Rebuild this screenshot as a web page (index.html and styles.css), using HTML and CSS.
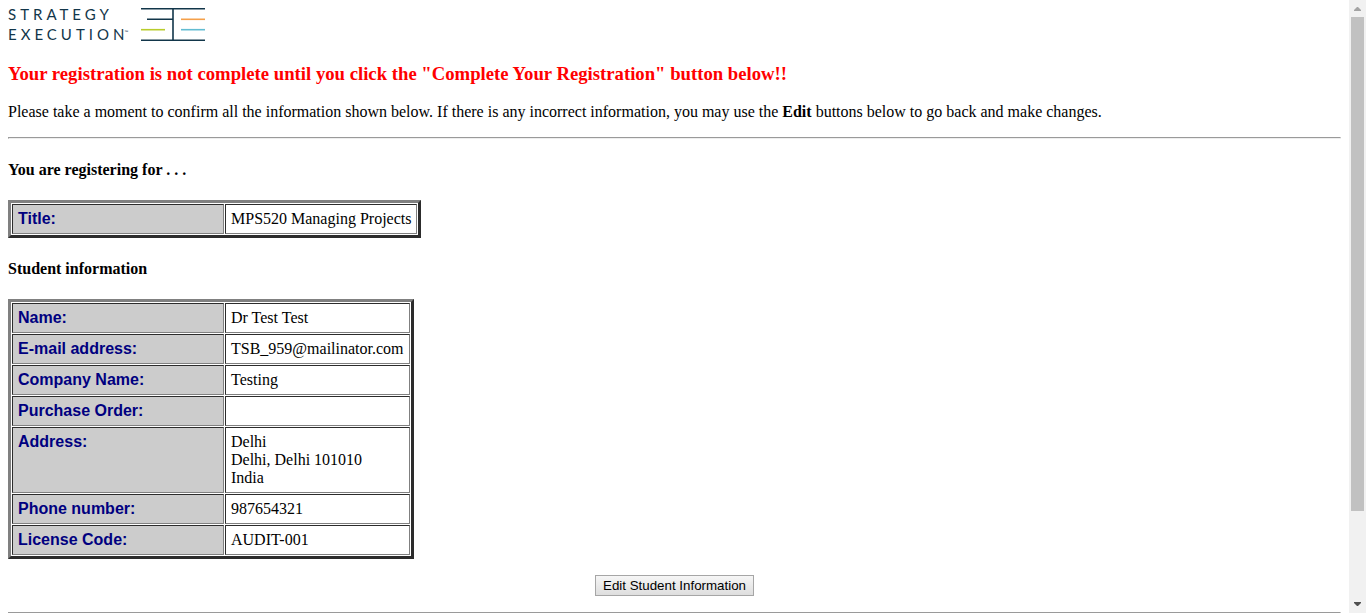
FILE: index.html
```html
<!DOCTYPE html>
<html lang="en">
<head>
<meta charset="utf-8">
<title>Confirm Your Registration</title>
<link rel="stylesheet" href="styles.css">
</head>
<body>
<main class="page">
  <header class="logo">
    <div class="wordmark">STRATEGY<br>EXECUTIO<span class="last">N<span class="tm">™</span></span></div>
    <svg class="mark" width="66" height="34" viewBox="0 0 66 34" aria-hidden="true">
      <path d="M1 .8H65M7 11.3H33M1 32.3H65M33 .8V32.3" stroke="#12364a" stroke-width="1.6" fill="none"/>
      <path d="M41 11.3H65" stroke="#f5a04a" stroke-width="1.6"/>
      <path d="M1 21.7H25" stroke="#b9cc2c" stroke-width="1.6"/>
      <path d="M41 21.7H65" stroke="#62bcd2" stroke-width="1.6"/>
    </svg>
  </header>
  <h3 class="warning">Your registration is not complete until you click the "Complete Your Registration" button below!!</h3>
  <p class="intro">Please take a moment to confirm all the information shown below. If there is any incorrect information, you may use the <b>Edit</b> buttons below to go back and make changes.</p>
  <hr class="rule">
  <h4 class="section">You are registering for . . .</h4>
  <table class="details">
    <tr><th scope="row">Title:</th><td>MPS520 Managing Projects</td></tr>
  </table>
  <h4 class="section">Student information</h4>
  <table class="details">
    <tr><th scope="row">Name:</th><td>Dr Test Test</td></tr>
    <tr><th scope="row">E-mail address:</th><td>TSB_959@mailinator.com</td></tr>
    <tr><th scope="row">Company Name:</th><td>Testing</td></tr>
    <tr><th scope="row">Purchase Order:</th><td>&nbsp;</td></tr>
    <tr><th scope="row">Address:</th><td>Delhi<br>Delhi, Delhi 101010<br>India</td></tr>
    <tr><th scope="row">Phone number:</th><td>987654321</td></tr>
    <tr><th scope="row">License Code:</th><td>AUDIT-001</td></tr>
  </table>
  <form class="actions"><button class="edit" type="button">Edit Student Information</button></form>
  <hr class="rule">
</main>
<div class="scrollbar" aria-hidden="true">
  <svg class="arrow" width="17" height="17"><path d="M5 11V10L8 7H9L12 10V11Z" fill="#a3a3a3"/></svg>
  <div class="track"><div class="thumb"></div></div>
  <svg class="arrow" width="17" height="17"><path d="M5 6V7L8 10H9L12 7V6Z" fill="#505050"/></svg>
</div>
</body>
</html>
```
FILE: styles.css
```css
body {
  margin: 0;
  height: 100vh;
  display: flex;
  overflow: hidden;
  background: #fff;
  color: #000;
  font: 16px/18px "Liberation Serif", "Times New Roman", serif;
}
.page {
  flex: 1;
  min-width: 0;
  padding: 0 8px;
  overflow: hidden;
}
.logo {
  display: flex;
  gap: 12px;
  padding-top: 4px;
}
.wordmark {
  color: #12364a;
  font-family: Lato, sans-serif;
  font-size: 15px;
  line-height: 20px;
  letter-spacing: 4px;
}
.last {
  letter-spacing: 0;
}
.tm {
  font-size: 5px;
  line-height: 5px;
  vertical-align: 6px;
}
.mark {
  margin-top: 4px;
}
.warning {
  margin: 20px 0 19px;
  color: #f00;
  line-height: 20px;
}
.intro {
  margin: 0 0 16px;
}
.rule {
  margin: 0;
  border: 1px inset #eee;
}
.section {
  margin: 22px 0 21px;
  line-height: 18px;
}
.details {
  border: 3px solid;
  border-color: #808080 #2c2c2c #2c2c2c #808080;
  border-spacing: 1px;
}
.details th,
.details td {
  padding: 5px;
  border: 1px solid;
  border-color: #2c2c2c #808080 #808080 #2c2c2c;
  text-align: left;
  vertical-align: top;
}
.details th {
  width: 200px;
  background: #ccc;
  color: #000080;
  font-family: "Liberation Sans", Arial, sans-serif;
}
.actions {
  margin: 16px 0;
  text-align: center;
}
.edit {
  display: inline-block;
  padding: 2px 7px;
  border: 1px solid #a6a6a6;
  border-radius: 0;
  background: linear-gradient(#f6f6f6, #dedede);
  color: #000;
  font-family: "Liberation Sans", Arial, sans-serif;
  line-height: 15px;
  vertical-align: top;
}
.scrollbar {
  width: 17px;
  display: flex;
  flex-direction: column;
  background: #f1f1f1;
}
.arrow {
  display: block;
}
.track {
  flex: 1;
  padding: 0 2px;
}
.thumb {
  height: 85.3%;
  background: #c1c1c1;
}
```
